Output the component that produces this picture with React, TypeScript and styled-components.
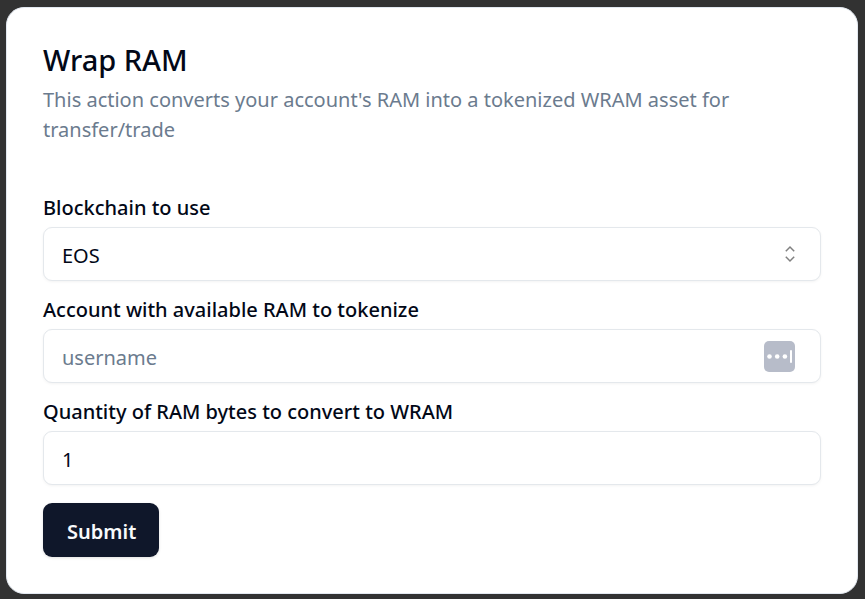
import React from "react";
import styled, { createGlobalStyle, css } from "styled-components";

const GlobalStyle = createGlobalStyle`
  *, *::before, *::after { box-sizing: border-box; }
  body {
    margin: 0;
    background: #323232;
    color: #020817;
    font-family: "Segoe UI", "Noto Sans", "Open Sans", sans-serif;
  }
`;

const Page = styled.main`
  padding: 7px 7px 5px 6px;
`;

const Card = styled.section`
  padding: 36px;
  border: 1px solid #e2e8f0;
  border-radius: 18px;
  background: #ffffff;
`;

const Title = styled.h1`
  margin: 0;
  font-size: 29px;
  font-weight: 500;
  line-height: 32px;
`;

const Description = styled.p`
  margin: 9px 0 0;
  color: #6b7b8e;
  font-size: 20px;
  line-height: 30px;
`;

const Form = styled.form`
  display: flex;
  flex-direction: column;
  gap: 18px;
  margin-top: 52px;
`;

const Field = styled.div`
  display: flex;
  flex-direction: column;
  gap: 9px;
`;

const Label = styled.label`
  font-size: 20px;
  font-weight: 500;
  line-height: 21px;
`;

const ControlFrame = styled.div`
  position: relative;
  display: flex;
`;

const controlStyle = css`
  width: 100%;
  height: 54px;
  padding: 2px 18px 0;
  border: 1px solid #e4e8ec;
  border-radius: 9px;
  background: #ffffff;
  box-shadow: 0 1px 3px rgba(0, 0, 0, 0.05);
  color: inherit;
  font: inherit;
  font-size: 20px;
`;

const Select = styled.select`
  ${controlStyle}
  appearance: none;
`;

const Input = styled.input`
  ${controlStyle}
  &::placeholder { color: #6b7b8e; opacity: 1; }
`;

const Adornment = styled.span<{ $right: number }>`
  position: absolute;
  top: 0;
  bottom: 0;
  right: ${(p) => p.$right}px;
  display: flex;
  align-items: center;
  pointer-events: none;
`;

const Submit = styled.button`
  align-self: flex-start;
  height: 54px;
  padding: 2px 23px 0 24px;
  border: 0;
  border-radius: 9px;
  background: #0f172a;
  box-shadow: 0 1px 3px rgba(0, 0, 0, 0.12);
  color: #f8fafc;
  font: inherit;
  font-size: 20px;
  font-weight: 600;
`;

const ChevronsIcon = () => (
  <svg width="24" height="24" viewBox="0 0 24 24" fill="none" stroke="#808080" strokeWidth="1.5" aria-hidden="true">
    <path d="M7.8 9.2 12 5 16.2 9.2M7.8 14.8 12 19 16.2 14.8" />
  </svg>
);

const PasswordIcon = () => (
  <svg width="31" height="31" viewBox="0 0 31 31" fill="#ffffff" aria-hidden="true">
    <rect width="31" height="31" rx="5" fill="#b7bcc9" />
    <circle cx="5.5" cy="15.5" r="2.3" />
    <circle cx="13.2" cy="15.5" r="2.3" />
    <circle cx="20.9" cy="15.5" r="2.3" />
    <rect x="26" y="9" width="2" height="13" rx="1" />
  </svg>
);

export default function App() {
  return (
    <>
      <GlobalStyle />
      <Page>
        <Card>
          <Title>Wrap RAM</Title>
          <Description>
            This action converts your account's RAM into a tokenized WRAM asset for transfer/trade
          </Description>
          <Form onSubmit={(e) => e.preventDefault()}>
            <Field>
              <Label htmlFor="chain">Blockchain to use</Label>
              <ControlFrame>
                <Select id="chain" defaultValue="EOS">
                  <option>EOS</option>
                </Select>
                <Adornment $right={19}><ChevronsIcon /></Adornment>
              </ControlFrame>
            </Field>
            <Field>
              <Label htmlFor="account">Account with available RAM to tokenize</Label>
              <ControlFrame>
                <Input id="account" placeholder="username" />
                <Adornment $right={26}><PasswordIcon /></Adornment>
              </ControlFrame>
            </Field>
            <Field>
              <Label htmlFor="quantity">Quantity of RAM bytes to convert to WRAM</Label>
              <ControlFrame>
                <Input id="quantity" inputMode="numeric" defaultValue="1" />
              </ControlFrame>
            </Field>
            <Submit type="submit">Submit</Submit>
          </Form>
        </Card>
      </Page>
    </>
  );
}
